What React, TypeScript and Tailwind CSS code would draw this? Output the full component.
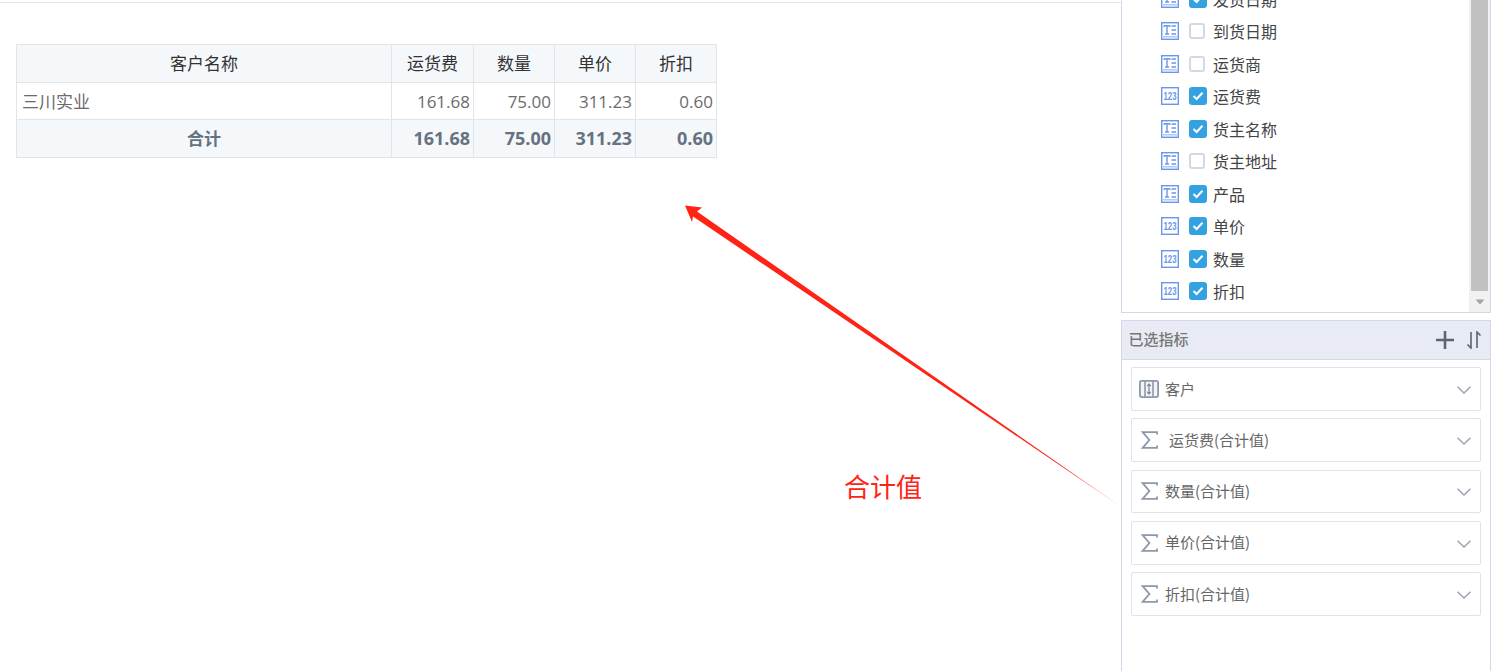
import React from "react";

const fields: { name: string; kind: "text" | "num"; on: boolean }[] = [
  { name: "发货日期", kind: "text", on: true },
  { name: "到货日期", kind: "text", on: false },
  { name: "运货商", kind: "text", on: false },
  { name: "运货费", kind: "num", on: true },
  { name: "货主名称", kind: "text", on: true },
  { name: "货主地址", kind: "text", on: false },
  { name: "产品", kind: "text", on: true },
  { name: "单价", kind: "num", on: true },
  { name: "数量", kind: "num", on: true },
  { name: "折扣", kind: "num", on: true },
];

const measures: { name: string; group?: boolean; indent?: boolean }[] = [
  { name: "客户", group: true },
  { name: "运货费(合计值)", indent: true },
  { name: "数量(合计值)" },
  { name: "单价(合计值)" },
  { name: "折扣(合计值)" },
];

function TextIcon() {
  return (
    <svg width="18" height="18" viewBox="0 0 18 18" className="shrink-0">
      <rect x="0.7" y="0.7" width="16.6" height="16.6" fill="#fff" stroke="#6a97ea" strokeWidth="1.4" />
      <path d="M3 3.8H9M3 3.8V5M9 3.8V5M6 3.8V12M4 12H8M10.5 4H15M10.5 8H15M10.5 12H15" stroke="#6a97ea" strokeWidth="1.4" fill="none" />
      <path d="M2 14.8H16" stroke="#a9c3f2" strokeWidth="1.4" />
    </svg>
  );
}

function NumIcon() {
  return (
    <svg width="18" height="18" viewBox="0 0 18 18" className="shrink-0">
      <rect x="0.7" y="0.7" width="16.6" height="16.6" fill="#fff" stroke="#6a97ea" strokeWidth="1.4" />
      <text
        x="9"
        y="13.2"
        textAnchor="middle"
        fontSize="11.5"
        fontWeight="700"
        textLength={13}
        lengthAdjust="spacingAndGlyphs"
        fontFamily="'Liberation Sans',sans-serif"
        fill="#6a97ea"
      >
        123
      </text>
    </svg>
  );
}

function Check({ on }: { on: boolean }) {
  return (
    <div className="w-[18px] shrink-0">
      {on ? (
        <div className="w-[18px] h-[18px] rounded-[3px] bg-[#34a2e0] flex items-center justify-center">
          <svg width="12" height="10" viewBox="0 0 12 10">
            <path d="M1.5 5L4.6 8L10.5 1.8" stroke="#fff" strokeWidth="2" fill="none" />
          </svg>
        </div>
      ) : (
        <div className="w-4 h-4 rounded-[3px] border-2 border-[#d3d8e4] bg-white" />
      )}
    </div>
  );
}

function Sigma() {
  return (
    <svg width="20" height="18" viewBox="0 0 20 18" className="shrink-0">
      <path d="M18 3.4V1.2H3.6L10.4 9L3.6 16.8H18V14.6" stroke="#8f98a8" strokeWidth="1.8" fill="none" />
    </svg>
  );
}

function GroupIcon() {
  return (
    <svg width="20" height="18" viewBox="0 0 20 18" className="shrink-0">
      <rect x="0.9" y="0.9" width="18.2" height="16.2" rx="2" fill="#f3f4f6" stroke="#8f98a8" strokeWidth="1.8" />
      <path d="M6 1V17M14 1V17" stroke="#8f98a8" strokeWidth="1.6" fill="none" />
      <path d="M10 4V14M8.3 6.2L10 4L11.7 6.2M8.3 11.8L10 14L11.7 11.8" stroke="#7f8898" strokeWidth="1.2" fill="none" />
    </svg>
  );
}

const th = "border border-[#e1e4e8] font-normal text-center pt-[1px]";
const num = "border border-[#e1e4e8] text-right pr-[3px]";

export default function App() {
  return (
    <div className="relative w-[1495px] h-[671px] overflow-hidden bg-white flex font-['Noto_Sans_CJK_SC',sans-serif]">
      <main className="w-[1121px] shrink-0 pt-[2px]">
        <div className="border-t border-[#e4e4e4] pt-[41px] pl-4">
          <table className="table-fixed border-collapse w-[700px] text-[17px] font-['Open_Sans','Noto_Sans_CJK_SC',sans-serif]">
            <colgroup>
              <col className="w-[375px]" />
              <col className="w-[82px]" />
              <col className="w-[81px]" />
              <col className="w-[81px]" />
              <col className="w-[81px]" />
            </colgroup>
            <thead>
              <tr className="h-[38px] bg-[#f5f8fb] text-[#333]">
                <th className={th}>客户名称</th>
                <th className={th}>运货费</th>
                <th className={th}>数量</th>
                <th className={th}>单价</th>
                <th className={th}>折扣</th>
              </tr>
            </thead>
            <tbody>
              <tr className="h-[37px] text-[#6b6b6b]">
                <td className="border border-[#e1e4e8] pl-[5px] pt-[2px]">三川实业</td>
                <td className={num + " pt-[1px]"}>161.68</td>
                <td className={num + " pt-[1px]"}>75.00</td>
                <td className={num + " pt-[1px]"}>311.23</td>
                <td className={num + " pt-[1px]"}>0.60</td>
              </tr>
              <tr className="h-[38px] bg-[#f5f8fb] text-[#667280] font-bold">
                <td className="border border-[#e1e4e8] text-center">合计</td>
                <td className={num + " text-[18px]"}>161.68</td>
                <td className={num + " text-[18px]"}>75.00</td>
                <td className={num + " text-[18px]"}>311.23</td>
                <td className={num + " text-[18px]"}>0.60</td>
              </tr>
            </tbody>
          </table>
        </div>
      </main>

      <aside className="w-[370px] shrink-0 flex flex-col">
        <div className="h-[313px] shrink-0 flex border-x border-b border-[#d3d9ea]">
          <div className="flex-1 overflow-hidden">
            <div className="-mt-[17.5px] pl-[39px]">
              {fields.map((f) => (
                <div key={f.name} className="h-[32.5px] flex items-center text-[16px] text-[#444]">
                  {f.kind === "text" ? <TextIcon /> : <NumIcon />}
                  <div className="ml-[10px]">
                    <Check on={f.on} />
                  </div>
                  <span className="ml-[6px]">{f.name}</span>
                </div>
              ))}
            </div>
          </div>
          <div className="w-[21px] shrink-0 bg-[#f1f1f1] flex flex-col pl-[2px] pr-[2px]">
            <div className="flex-1 bg-[#c1c1c1]" />
            <div className="h-[21px] flex items-center justify-center">
              <svg width="10" height="6" viewBox="0 0 10 6">
                <path d="M0.5 0.5H9.5L5 5.5Z" fill="#a3a3a3" />
              </svg>
            </div>
          </div>
        </div>

        <div className="mt-[7px] h-[40px] shrink-0 bg-[#e8ebf3] border border-[#d3d9ea] flex items-center pl-[6.5px] pr-[8px]">
          <span className="text-[15px] font-medium text-[#777] -mt-[2px]">已选指标</span>
          <svg width="18" height="18" viewBox="0 0 18 18" className="ml-auto">
            <path d="M9 0V18M0 9H18" stroke="#5c6470" strokeWidth="2.6" />
          </svg>
          <svg width="16" height="18" viewBox="0 0 16 18" className="ml-[12px]">
            <path d="M5 1V17L1.5 13.5M11 17V1L14.5 4.5" stroke="#5c6470" strokeWidth="1.6" fill="none" />
          </svg>
        </div>

        <div className="flex-1 border-x border-[#d3d9ea] pt-[7px] px-[9px] flex flex-col gap-[7.5px]">
          {measures.map((m) => (
            <div
              key={m.name}
              className="h-[43.75px] shrink-0 border border-[#dfe2ea] rounded-[2px] flex items-center pl-[7px] pr-[9px] text-[15px] text-[#666]"
            >
              {m.group ? <GroupIcon /> : <Sigma />}
              <span className={m.indent ? "ml-[10px]" : "ml-[6px]"}>{m.name}</span>
              <svg width="14" height="8" viewBox="0 0 14 8" className="ml-auto mt-[2px]">
                <path d="M0.5 0.8L7 7L13.5 0.8" stroke="#9ba4b2" strokeWidth="1.5" fill="none" />
              </svg>
            </div>
          ))}
        </div>
      </aside>

      <svg className="absolute inset-0 pointer-events-none" width="1495" height="671" viewBox="0 0 1495 671">
        <defs>
          <linearGradient id="tail" gradientUnits="userSpaceOnUse" x1="1060" y1="465" x2="1122" y2="507">
            <stop offset="0" stopColor="#ff2215" />
            <stop offset="1" stopColor="#ff2215" stopOpacity="0.45" />
          </linearGradient>
        </defs>
        <polygon points="685,205.5 702,207.5 697,211.5 1122,507.5 693,216.5 692,222" fill="url(#tail)" />
      </svg>
      <div className="absolute left-[844px] top-[467px] text-[26px] leading-[38px] text-[#ff2215]">合计值</div>
    </div>
  );
}
